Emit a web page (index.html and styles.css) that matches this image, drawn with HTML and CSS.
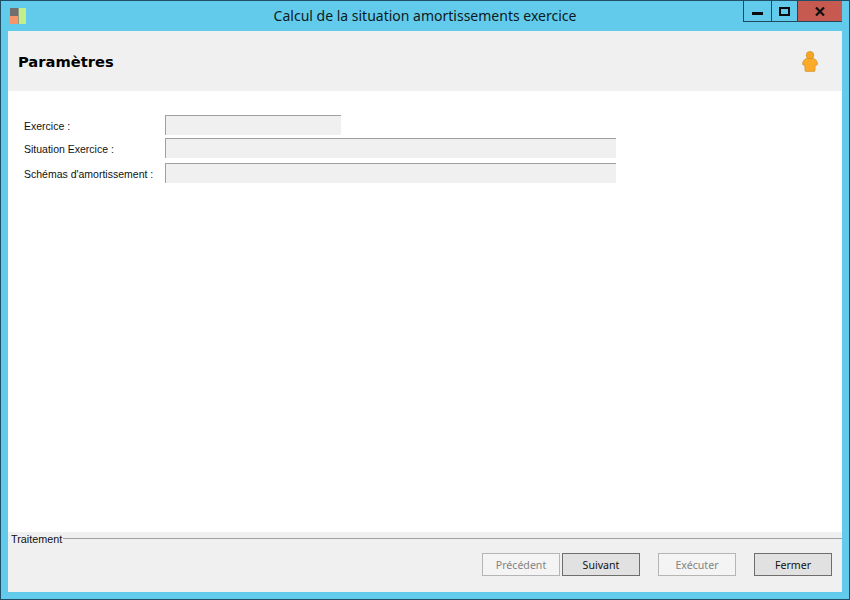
FILE: index.html
```html
<!DOCTYPE html>
<html lang="fr">
<head>
<meta charset="utf-8">
<title>Calcul de la situation amortissements exercice</title>
<link rel="stylesheet" href="styles.css">
</head>
<body>
<div class="window">
  <div class="titlebar">
    <svg class="app-icon" width="18" height="16" viewBox="0 0 18 16">
      <rect x="0" y="0" width="8" height="8" fill="#6f6f70"/>
      <rect x="0" y="8" width="8" height="8" fill="#f79468"/>
      <rect x="8" y="0" width="8" height="16" fill="#c4ee8a"/>
      <rect x="8" y="0" width="1" height="16" fill="#8f9a80"/>
    </svg>
    <div class="title">Calcul de la situation amortissements exercice</div>
    <div class="controls">
      <div class="ctl ctl-min"><span class="glyph-min"></span></div>
      <div class="ctl ctl-max"><span class="glyph-max"></span></div>
      <div class="ctl ctl-close">
        <svg width="10" height="9" viewBox="0 0 10 9"><path d="M1 0.5 L9 8.5 M9 0.5 L1 8.5" stroke="#111" stroke-width="2.2" fill="none"/></svg>
      </div>
    </div>
  </div>
  <div class="client">
    <div class="header">
      <h1 class="heading">Paramètres</h1>
      <svg class="user-icon" width="16" height="21" viewBox="0 0 16 21">
        <circle cx="8" cy="4.2" r="3.8" fill="#f5a623" stroke="#c98a2a" stroke-width="0.6"/>
        <path d="M4.5 7.5 H11.5 C13.8 8 15.5 10.5 15.5 13 C15.5 14 14.2 14.5 13.2 14.2 L13 19.6 Q13 20.4 12.2 20.4 H3.8 Q3 20.4 3 19.6 L2.8 14.2 C1.8 14.5 0.5 14 0.5 13 C0.5 10.5 2.2 8 4.5 7.5 Z" fill="#fbab27" stroke="#c98a2a" stroke-width="0.6"/>
      </svg>
    </div>
    <div class="form">
      <div class="row row-1">
        <label class="label">Exercice :</label>
        <div class="field field-short"></div>
      </div>
      <div class="row row-2">
        <label class="label">Situation Exercice :</label>
        <div class="field field-long"></div>
      </div>
      <div class="row row-3">
        <label class="label">Schémas d'amortissement :</label>
        <div class="field field-long"></div>
      </div>
    </div>
    <div class="footer">
      <div class="group-line">
        <span class="group-label">Traitement</span>
        <span class="rule"></span>
      </div>
      <div class="actions">
        <button class="btn btn-off" disabled>Précédent</button>
        <button class="btn btn-on">Suivant</button>
        <button class="btn btn-off btn-exec" disabled>Exécuter</button>
        <button class="btn btn-on btn-close">Fermer</button>
      </div>
    </div>
  </div>
</div>
</body>
</html>
```

FILE: styles.css
```css
* { box-sizing: border-box; }
html, body { margin: 0; padding: 0; }
body { width: 850px; height: 600px; overflow: hidden; font-family: "Noto Sans", "Open Sans", sans-serif; }

.window {
  width: 850px; height: 600px;
  display: flex; flex-direction: column;
  background: #62cbec;
  border: 1px solid #1d4f66;
  padding: 0 7px 7px;
}

.titlebar { height: 30px; flex: none; display: flex; position: relative; }
.app-icon { position: absolute; left: 2px; top: 7px; }
.title {
  flex: 1; text-align: center;
  font-size: 14px; line-height: 30px; color: #0f1a20;
}
.controls { position: absolute; right: 0; top: 0; display: flex; height: 21px; border-bottom: 1px solid #21485a; }
.ctl { display: flex; align-items: center; justify-content: center; border-left: 1px solid #21485a; }
.ctl-min { width: 28px; }
.ctl-max { width: 26px; }
.ctl-close { width: 45px; background: #c75a50; }
.glyph-min { width: 11px; height: 3px; background: #0c0c0c; margin-top: 5px; }
.glyph-max { width: 11px; height: 9px; border: 2px solid #0c0c0c; }

.client { flex: 1; display: flex; flex-direction: column; background: #fff; }
.header {
  height: 60px; flex: none; background: #f0f0f0;
  display: flex; align-items: center; justify-content: space-between;
  padding: 0 24px 0 10px;
}
.heading { margin: 0; padding-top: 1px; font-size: 14.7px; line-height: 18px; font-weight: 700; color: #000; font-family: "DejaVu Sans", sans-serif; }

.form { flex: 1; padding: 24px 0 0 16px; }
.row { display: flex; align-items: center; height: 20px; }
.row-2 { margin-top: 3px; }
.row-3 { margin-top: 5px; }
.label { width: 141px; flex: none; padding-top: 1px; font-family: "Liberation Sans", sans-serif; font-size: 10.5px; color: #111; white-space: nowrap; }
.field { height: 20px; background: #f0f0f0; border-top: 1px solid #a0a0a0; border-left: 1px solid #a0a0a0; }
.field-short { width: 176px; }
.field-long { width: 451px; }

.footer { height: 60px; flex: none; background: #f0f0f0; }
.group-line { display: flex; align-items: center; height: 13px; padding-left: 3px; }
.group-label { font-family: "Liberation Sans", sans-serif; font-size: 10.8px; color: #111; }
.rule { flex: 1; height: 1px; background: #a0a0a0; margin-left: 1px; }
.actions { display: flex; padding: 8px 10px 0 474px; }
.btn {
  width: 78px; height: 23px; padding: 0;
  font-family: inherit; font-size: 10.6px; border-radius: 0;
}
.btn-off { background: #f4f4f4; border: 1px solid #b5b5b5; color: #838383; }
.btn-on { background: #e1e1e1; border: 1px solid #6e6e6e; color: #111; margin-left: 2px; }
.btn-exec { margin-left: 18px; }
.btn-close { margin-left: 18px; }
```
